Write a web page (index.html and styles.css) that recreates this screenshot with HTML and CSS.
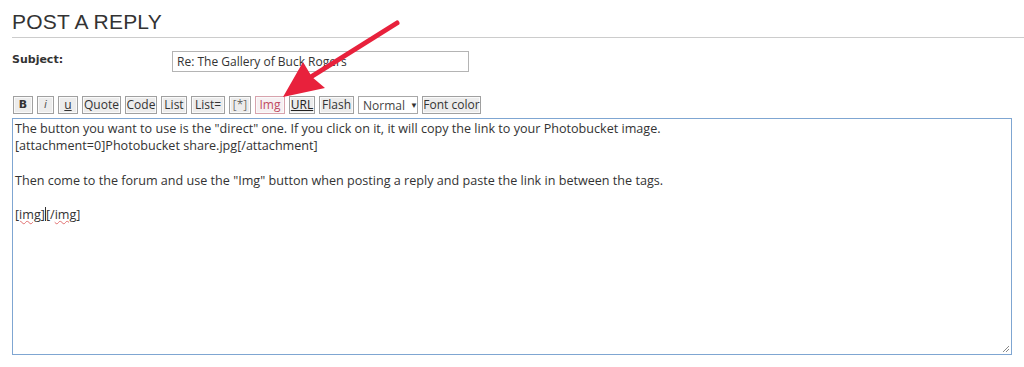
FILE: index.html
```html
<!DOCTYPE html>
<html>
<head>
<meta charset="utf-8">
<link rel="stylesheet" href="styles.css">
</head>
<body>
<div class="page">
  <h2 class="title">POST A REPLY</h2>
  <div class="subject-row">
    <label class="label">Subject:</label>
    <div class="input">Re: The Gallery of Buck Rogers</div>
  </div>
  <div class="toolbar">
    <span class="btn b">B</span>
    <span class="btn i">i</span>
    <span class="btn u">u</span>
    <span class="btn w-quote">Quote</span>
    <span class="btn w-code">Code</span>
    <span class="btn w-list">List</span>
    <span class="btn w-liste">List=</span>
    <span class="btn w-star">[*]</span>
    <span class="btn img">Img</span>
    <span class="btn url">URL</span>
    <span class="btn w-flash">Flash</span>
    <span class="select"><span>Normal</span><span class="caret">▼</span></span>
    <span class="btn w-font">Font color</span>
  </div>
  <div class="textarea">
    <p>The button you want to use is the "direct" one. If you click on it, it will copy the link to your Photobucket image.</p>
    <p>[attachment=0]Photobucket share.jpg[/attachment]</p>
    <p>&nbsp;</p>
    <p>Then come to the forum and use the "Img" button when posting a reply and paste the link in between the tags.</p>
    <p>&nbsp;</p>
    <p><span class="sp">[img]</span><span class="cursor"></span>[/<span class="sp">img</span>]</p>
    <svg class="grip" width="10" height="10" viewBox="0 0 10 10"><path d="M9 3 L3 9 M9 6 L6 9" stroke="#888" stroke-width="1"/></svg>
  </div>
  <svg class="arrow" width="1024" height="367" viewBox="0 0 1024 367">
    <path d="M397 23 L306 80" stroke="#e8213c" stroke-width="5" stroke-linecap="round"/>
    <path d="M283 97 L303 62 L312 77 L325 88 Z" fill="#e8213c"/>
  </svg>
</div>
</body>
</html>
```
FILE: styles.css
```css
html, body { margin: 0; padding: 0; background: #fff; }
body { width: 1024px; height: 367px; overflow: hidden; }
.page { position: relative; padding: 10px 0 0 12px; font-family: "DejaVu Sans", Verdana, sans-serif; color: #333; }
.title {
  margin: 0; font-family: "Liberation Sans", Arial, sans-serif; font-weight: normal;
  font-size: 21px; line-height: 24px; color: #333; letter-spacing: 0.2px;
  border-bottom: 1px solid #ccc; padding-bottom: 3px;
}
.subject-row { display: flex; align-items: flex-start; margin-top: 13px; height: 21px; }
.label { width: 160px; font-size: 11px; font-weight: bold; color: #333; padding-top: 2px; }
.input {
  width: 291px; height: 19px; border: 1px solid #b4b4b4; font-family: "Open Sans", sans-serif;
  font-size: 12px; line-height: 19px; padding-left: 4px; color: #333;
}
.toolbar { display: flex; gap: 4px; margin-top: 24px; margin-left: 1px; height: 18px; }
.btn {
  box-sizing: border-box; height: 18px; border: 1px solid #a0a0a0; background: #ececec;
  font-family: "Open Sans", sans-serif; font-size: 12px; line-height: 15px; text-align: center; color: #333;
  box-shadow: inset 0 0 0 1px #fafafa; white-space: nowrap;
}
.b { width: 20px; font-weight: bold; font-family: "DejaVu Sans", sans-serif; font-size: 11px; }
.i { width: 17px; font-style: italic; font-family: "Liberation Sans", sans-serif; color: #555; font-size: 11px; }
.u { width: 20px; text-decoration: underline; }
.w-quote { width: 39px; }
.w-code { width: 32px; }
.w-list { width: 26px; }
.w-liste { width: 34px; }
.w-star { width: 22px; font-weight: 300; }
.img { width: 30px; color: #c04a60; border-color: #d7a3ad; background: #f6f0f2; }
.url { width: 26px; text-decoration: underline; color: #222; }
.w-flash { width: 35px; }
.w-font { width: 59px; }
.select {
  box-sizing: border-box; width: 60px; height: 18px; border: 1px solid #a8a8a8; background: #fff;
  font-family: "Open Sans", sans-serif; font-size: 12px; line-height: 15px; padding-left: 4px; color: #444;
  display: flex; align-items: center; gap: 5px; white-space: nowrap;
}
.caret { font-size: 8px; line-height: 8px; color: #333; }
.textarea {
  position: relative; box-sizing: border-box; width: 1000px; height: 237px; margin-top: 4px;
  border: 1px solid #7fa6d2; padding: 1px 2px;
  font-family: "Open Sans", "DejaVu Sans", sans-serif; font-size: 12.6px; color: #333;
}
.textarea p { margin: 0; line-height: 17.3px; white-space: nowrap; }
.sp { text-decoration: underline wavy #e07070; text-decoration-thickness: 1px; }
.cursor { display: inline-block; width: 1px; height: 14px; background: #333; vertical-align: -2px; }
.grip { position: absolute; right: 1px; bottom: 1px; }
.arrow { position: absolute; left: 0; top: 0; pointer-events: none; }
```
